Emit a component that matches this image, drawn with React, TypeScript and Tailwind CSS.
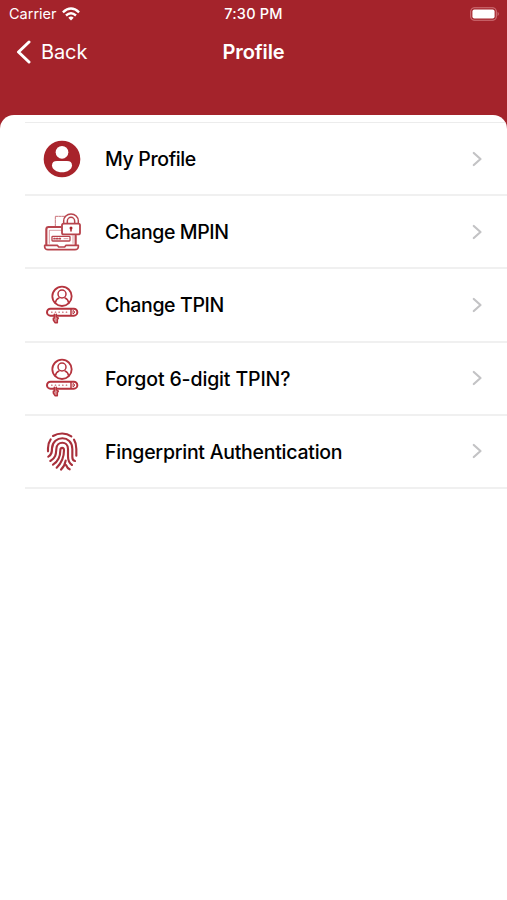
import type { ReactNode } from 'react'

function ProfileIcon() {
  return (
    <svg viewBox="0 0 168 156" className="w-[56px] h-[52px]">
      <circle cx="78" cy="78" r="55" fill="#a8232b" />
      <circle cx="78" cy="58" r="19" fill="#fff" />
      <path d="M63 84H93Q108 84 108 97C108 110 94 118 78 118S48 110 48 97Q48 84 63 84Z" fill="#fff" />
    </svg>
  )
}

function MpinIcon() {
  return (
    <svg viewBox="0 0 168 156" className="w-[56px] h-[52px]" fill="none" stroke="#b8444d" strokeLinecap="round" strokeLinejoin="round">
      <path d="M58 60V31H86" strokeWidth="3" strokeDasharray="7 3" opacity="0.75" />
      <path d="M31 117V70Q31 63 38 63H74M119 89V117" strokeWidth="6.5" />
      <path d="M40 112V73H76M111 89V112" strokeWidth="3" opacity="0.5" />
      <path d="M26 118H64L68 123H86L90 118H127V123Q126 131 117 131H36Q27 131 26 123Z" strokeWidth="5" />
      <rect x="48" y="91" width="54" height="14" rx="2" strokeWidth="4" />
      <path d="M54 98H78" strokeWidth="5" strokeDasharray="3 5" />
      <path d="M84 98H96" strokeWidth="3" opacity="0.55" />
      <path d="M83 53V45a22 21 0 0 1 44 0V53M94 53V45a11 11 0 0 1 22 0V53" strokeWidth="4.5" />
      <rect x="78" y="53" width="54" height="32" rx="5" fill="#fff" strokeWidth="5.5" />
      <circle cx="105" cy="66" r="4.5" fill="#a8232b" stroke="none" />
      <path d="M105 67V75" stroke="#a8232b" strokeWidth="4.5" />
    </svg>
  )
}

function TpinIcon() {
  return (
    <svg viewBox="0 -3 168 156" className="w-[56px] h-[52px]" fill="none" stroke="#b5343e" strokeLinecap="round" strokeLinejoin="round">
      <circle cx="78" cy="49" r="29" strokeWidth="5.5" />
      <circle cx="78" cy="42" r="12" strokeWidth="4.5" />
      <path d="M58 69Q60 57 69 54M98 69Q96 57 87 54" strokeWidth="4.5" />
      <rect x="33" y="86" width="91" height="21" rx="10.5" strokeWidth="6" />
      <path d="M47 96.500H94" strokeWidth="4" strokeDasharray="1 10" opacity="0.8" />
      <path d="M105 87V106" strokeWidth="4.5" />
      <path d="M112 92L117 96.500L112 101Z" strokeWidth="3" />
      <path d="M55 103V114L52 115V120L57 128H64V119L67 114L61 110V103" fill="#d98f94" strokeWidth="4.5" />
    </svg>
  )
}

function FingerprintIcon() {
  return (
    <svg viewBox="0 0 168 156" className="w-[56px] h-[52px]" fill="none" stroke="#a8303b" strokeWidth="6.4" strokeLinecap="round">
      <path d="M51 33C68 23 90 23 106 34" />
      <path d="M36 79V70C36 59 39 50 44 43M114 44C120 53 121 61 121 72V92" />
      <path d="M37 95C48 89 48 80 48 70C50 30 109 29 109 72V96C109 104 112 107 117 108" />
      <path d="M43 108C60 99 60 86 61 72C62 47 96 47 96 72V94C96 108 100 115 108 120" />
      <path d="M51 119C68 109 73 93 73 76C73 66 84 66 84 76C84 97 77 114 62 128" />
      <path d="M75 134C83 127 87 118 89 107M90 120C93 127 96 131 101 133" />
    </svg>
  )
}

const ITEMS: { label: string; icon: ReactNode; text: string }[] = [
  { label: 'My Profile', icon: <ProfileIcon />, text: 'tracking-[-0.36px]' },
  { label: 'Change MPIN', icon: <MpinIcon />, text: 'tracking-[-0.4px]' },
  { label: 'Change TPIN', icon: <TpinIcon />, text: 'tracking-[-0.36px]' },
  { label: 'Forgot 6-digit TPIN?', icon: <TpinIcon />, text: 'tracking-[-0.14px]' },
  { label: 'Fingerprint Authentication', icon: <FingerprintIcon />, text: 'tracking-[-0.26px]' },
]

function StatusBar() {
  return (
    <div className="grid grid-cols-3 items-center h-[27px] pl-[9px] pr-[7px] text-[14.5px]">
      <div className="flex items-center gap-[5px]">
        <span>Carrier</span>
        <svg viewBox="0 0 18 14" className="w-[18px] h-[14px]" fill="none" stroke="#fff" strokeWidth="2.4">
          <path d="M.9 5.300Q9-2.300 17.100 5.300" />
          <path d="M4 8.500Q9 3.900 14 8.500" />
          <path d="M6.300 10.700Q9 8.300 11.700 10.700L9 13.600Z" fill="#fff" stroke="none" />
        </svg>
      </div>
      <span className="pr-[2px] text-center font-medium tracking-[0.2px]">7:30 PM</span>
      <svg viewBox="0 0 30 14" className="w-[30px] h-[14px] justify-self-end">
        <rect x=".7" y=".7" width="25.6" height="12.6" rx="3.8" fill="none" stroke="#d0747a" strokeWidth="1.1" />
        <rect x="2.4" y="2.4" width="22.2" height="9.2" rx="2" fill="#fff" />
        <path d="M27.600 4.800Q30 7 27.600 9.200Z" fill="#d0747a" />
      </svg>
    </div>
  )
}

export default function App() {
  return (
    <div className="w-full h-[900px] flex flex-col bg-[#a4232b] font-['Inter','Liberation_Sans',sans-serif] text-white overflow-hidden">
      <StatusBar />

      <header className="grid grid-cols-3 items-center h-[50px] mb-[38px] px-[16px]">
        <button className="flex items-center gap-[9px] text-[20px] text-left tracking-[-0.1px]">
          <svg viewBox="0 0 16 24" className="w-[16px] h-[24px]" fill="none" stroke="#fff" strokeWidth="3" strokeLinecap="round" strokeLinejoin="round">
            <path d="M13 2L2.500 12L13 22" />
          </svg>
          Back
        </button>
        <h1 className="text-center text-[20px] font-semibold tracking-[-0.1px]">Profile</h1>
      </header>

      <main className="flex-1 bg-white rounded-t-[14px] pt-[7px] text-black overflow-hidden">
        <ul className="ml-[25px] border-t border-[#ececec]">
          {ITEMS.map((item) => (
            <li key={item.label} className="flex items-center h-[73.2px] pl-[11px] pr-[23px] border-b-2 border-[#f0f0f0]">
              {item.icon}
              <span className={`ml-[13px] pt-[2px] flex-1 text-[19.5px] font-medium ${item.text}`}>{item.label}</span>
              <svg viewBox="0 0 14 18" className="w-[14px] h-[18px]" fill="none" stroke="#c3c3c5" strokeWidth="2.2" strokeLinecap="round" strokeLinejoin="round">
                <path d="M3.800 3L10.500 9L3.800 15" />
              </svg>
            </li>
          ))}
        </ul>
      </main>
    </div>
  )
}
